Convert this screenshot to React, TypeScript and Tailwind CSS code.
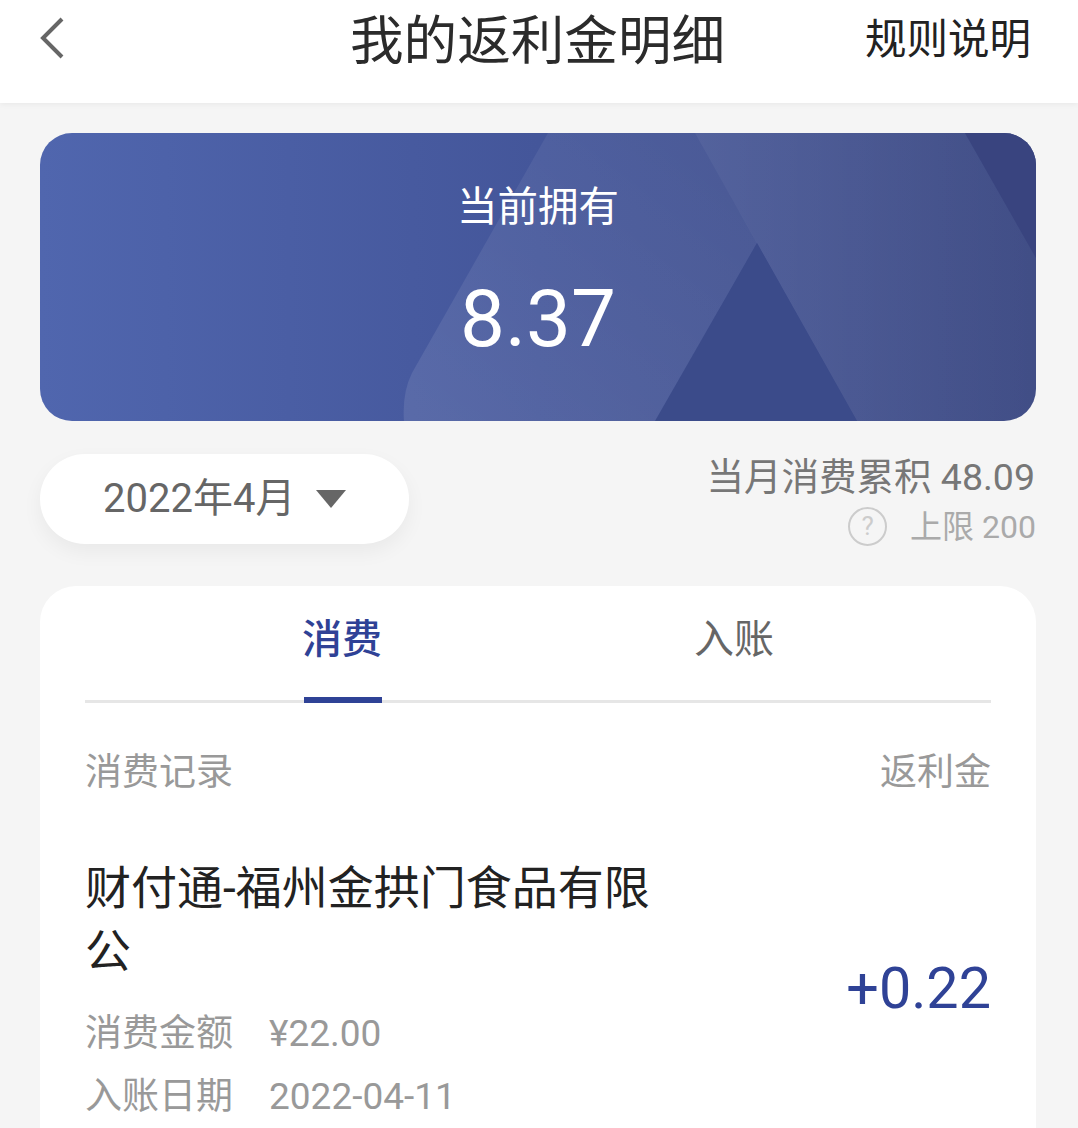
const FONT = "font-['Roboto','Noto_Sans_CJK_SC',sans-serif]";

function BalanceArt() {
  return (
    <svg className="absolute inset-0 h-full w-full" viewBox="0 0 996 288" preserveAspectRatio="none">
      <defs>
        <linearGradient id="band" x1="0" y1="1" x2="1" y2="0">
          <stop offset="0" stopColor="#ffffff" stopOpacity="0.1" />
          <stop offset="1" stopColor="#ffffff" stopOpacity="0.04" />
        </linearGradient>
        <linearGradient id="rightBand" x1="0" y1="0" x2="1" y2="0">
          <stop offset="0" stopColor="#ffffff" stopOpacity="0.09" />
          <stop offset="1" stopColor="#ffffff" stopOpacity="0.01" />
        </linearGradient>
      </defs>
      <path d="M508 0 L372 240 Q362 260 364 288 L617 288 L717 110 L655 0 Z" fill="url(#band)" />
      <path d="M655 0 L925 0 L996 125 L996 288 L817 288 Z" fill="url(#rightBand)" />
      <path d="M717 110 L615 288 L817 288 Z" fill="#3b4b8a" />
      <path d="M925 0 L996 0 L996 125 Z" fill="#39447f" />
    </svg>
  );
}

export default function App() {
  return (
    <div className={`${FONT} h-[1128px] w-[1078px] overflow-hidden bg-[#f5f5f5]`}>
      {/* Header */}
      <header className="relative flex h-[103px] items-start justify-between bg-white pl-[38px] pr-[47px] shadow-[0_1px_6px_rgba(0,0,0,0.06)]">
        <svg className="mt-[17px]" width="28" height="42" viewBox="0 0 28 42" fill="none">
          <path d="M24 2 L5 21 L24 40" stroke="#666666" strokeWidth="4" />
        </svg>
        <h1 className="absolute left-[350px] top-[11px] text-[53.6px] leading-[62px] font-normal text-[#2b2b2b]">我的返利金明细</h1>
        <span className="mt-[16px] text-[41.5px] leading-[48px] text-[#222222]">规则说明</span>
      </header>

      <main className="pl-[40px] pr-[42px] pt-[30px]">
        {/* Balance card */}
        <section className="relative flex h-[288px] flex-col items-center overflow-hidden rounded-[32px] bg-[linear-gradient(90deg,#5066ae_0%,#44569a_50%,#3f4c85_100%)] text-white">
          <BalanceArt />
          <p className="relative mt-[50px] text-[40.5px] leading-[48px]">当前拥有</p>
          <p className="relative mt-[41px] text-[80px] leading-[94px]">8.37</p>
        </section>

        {/* Month filter and totals */}
        <div className="mt-[33px] flex items-start justify-between">
          <button className="flex h-[90px] w-[369px] items-center rounded-[45px] bg-white pl-[63px] text-[40px] text-[#666666] shadow-[0_8px_20px_rgba(0,0,0,0.05)]">
            2022年4月
            <span className="ml-[21px] h-0 w-0 border-x-[15px] border-t-[18px] border-x-transparent border-t-[#666666]" />
          </button>
          <div className="flex flex-col items-end">
            <p className="pr-[1px] text-[37.5px] leading-[46px] text-[#777777]">当月消费累积 48.09</p>
            <div className="mt-[7px] flex items-center">
              <span className="flex h-[39px] w-[39px] items-center justify-center rounded-full border-2 border-[#cccccc] text-[26px] text-[#cccccc]">?</span>
              <span className="ml-[23px] text-[32px] leading-[38px] text-[#aaaaaa]">上限 200</span>
            </div>
          </div>
        </div>

        {/* Records */}
        <section className="mt-[40px] h-[600px] rounded-[36px] bg-white px-[45px]">
          <div className="relative flex h-[117px] border-b-[3px] border-[#e6e6e6]">
            <div className="relative ml-[219px] w-[78px] pt-[30px] -indent-[2px] text-[40px] leading-[48px] font-medium whitespace-nowrap text-[#2f4296]">
              消费
              <span className="absolute -bottom-[3px] left-0 h-[6px] w-full bg-[#2f4296]" />
            </div>
            <div className="ml-[312px] pt-[30px] text-[40px] leading-[48px] text-[#666666]">入账</div>
          </div>

          <div className="mt-[48px] flex justify-between text-[37px] leading-[44px] text-[#999999]">
            <span>消费记录</span>
            <span>返利金</span>
          </div>

          <div className="mt-[62px] flex items-center justify-between">
            <div className="w-[580px]">
              <p className="text-[46px] leading-[63px] text-[#222222]">财付通-福州金拱门食品有限公</p>
              <div className="mt-[19px] flex gap-[36px] text-[37px] leading-[63px] text-[#999999]">
                <div className="flex flex-col">
                  <span>消费金额</span>
                  <span>入账日期</span>
                </div>
                <div className="flex flex-col">
                  <span>¥22.00</span>
                  <span>2022-04-11</span>
                </div>
              </div>
            </div>
            <span className="mb-[8px] text-[57.5px] leading-[70px] text-[#2f4296]">+0.22</span>
          </div>
        </section>
      </main>
    </div>
  );
}
